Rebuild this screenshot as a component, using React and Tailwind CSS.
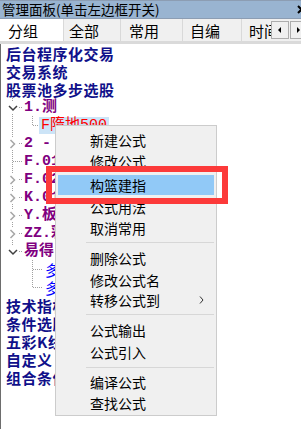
import React from "react";

const cjk = "font-['Noto_Sans_CJK_SC',sans-serif]";
const mono = "font-['Liberation_Mono','Noto_Sans_CJK_SC',monospace]";

const tabs = [
  { label: "分组", w: "w-[63px]", pl: "pl-[8px]", active: true },
  { label: "全部", w: "w-[57px]", pl: "pl-[5px]" },
  { label: "常用", w: "w-[62px]", pl: "pl-[8px]" },
  { label: "自编", w: "w-[59px]", pl: "pl-[7px]" },
  { label: "时间", w: "w-[60px]", pl: "pl-[7px]" },
];

// labels are cut where the context menu covers them
const rows = [
  { type: "root", text: "后台程序化交易" },
  { type: "root", text: "交易系统" },
  { type: "root", text: "股票池多步选股" },
  { type: "l1", g: "open", text: "1.测" },
  { type: "sel", text: "F隋地500" },
  { type: "l1", g: "closed", text: "2 -" },
  { type: "l1", g: "leaf", text: "F.01" },
  { type: "l1", g: "closed", text: "F.02" },
  { type: "l1", g: "closed", text: "K.01" },
  { type: "l1", g: "closed", text: "Y.板" },
  { type: "l1", g: "closed", text: "ZZ.彩" },
  { type: "l1", g: "lastOpen", text: "易得" },
  { type: "l2", g2: "tee", text: "多" },
  { type: "l2", g2: "last", text: "多" },
  { type: "root", text: "技术指标" },
  { type: "root", text: "条件选股" },
  { type: "root", text: "五彩K线" },
  { type: "root", text: "自定义" },
  { type: "root", text: "组合条件" },
];

const menu = [
  { t: "新建公式", h: "h-[22px]" },
  { t: "修改公式", h: "h-[20px]" },
  { t: "构篮建指", h: "h-[20px] mt-[4px]", active: true },
  { t: "公式用法", h: "h-[23px]" },
  { t: "取消常用", h: "h-[20px]" },
  { sep: true, h: "h-[9px]" },
  { t: "删除公式", h: "h-[22px]" },
  { t: "修改公式名", h: "h-[21px]" },
  { t: "转移公式到", h: "h-[20px]", sub: true },
  { sep: true, h: "h-[9px]" },
  { t: "公式输出", h: "h-[22px]" },
  { t: "公式引入", h: "h-[22px]" },
  { sep: true, h: "h-[8px]" },
  { t: "编译公式", h: "h-[22px]" },
  { t: "查找公式", h: "h-[20px]" },
];

const dot = { stroke: "#a0a0a0", strokeDasharray: "1 1", shapeRendering: "crispEdges" };

function Gutter({ kind }) {
  const hasChevron = kind === "open" || kind === "closed" || kind === "lastOpen";
  return (
    <svg width="22" height="18" className="shrink-0">
      {kind !== "blank" && (
        <line x1="11.5" y1="0" x2="11.5" y2={kind === "lastOpen" ? 10 : 18} {...dot} />
      )}
      {kind !== "blank" && kind !== "pass" && <line x1="12" y1="9.5" x2="22" y2="9.5" {...dot} />}
      {hasChevron && <rect x="6" y="3" width="12" height="13" fill="#fff" />}
      {(kind === "open" || kind === "lastOpen") && (
        <polyline points="8,8 12,12 16,8" fill="none" stroke="#404040" strokeWidth="1.5" />
      )}
      {kind === "closed" && (
        <polyline points="9.5,6 13.5,10 9.5,14" fill="none" stroke="#a6a6a6" strokeWidth="1.5" />
      )}
    </svg>
  );
}

function Gutter2({ kind, w }) {
  return (
    <svg width={w} height="18" className="shrink-0">
      <line x1="9.5" y1="0" x2="9.5" y2={kind === "last" ? 10 : 18} {...dot} />
      <line x1="10" y1="9.5" x2={w} y2="9.5" {...dot} />
    </svg>
  );
}

function TreeRow({ row }) {
  if (row.type === "root") {
    return (
      <div className={`h-[18px] flex items-center pl-[5px] whitespace-nowrap ${cjk} text-[15px] leading-none font-bold tracking-[0.5px] text-[#10108a]`}>
        {row.text}
      </div>
    );
  }
  if (row.type === "l1") {
    return (
      <div className="h-[18px] flex items-center whitespace-nowrap">
        <Gutter kind={row.g} />
        <span className={`pl-[1px] ${mono} text-[15px] leading-none font-bold text-[#800080]`}>{row.text}</span>
      </div>
    );
  }
  if (row.type === "sel") {
    return (
      <div className="h-[18px] flex items-center whitespace-nowrap">
        <Gutter kind="pass" />
        <Gutter2 kind="last" w={16} />
        <span className={`h-[17px] flex items-center bg-[#cce4f7] px-[2px] ${mono} text-[15px] leading-none text-[#ff0000]`}>
          {row.text}
        </span>
      </div>
    );
  }
  return (
    <div className="h-[18px] flex items-center whitespace-nowrap">
      <Gutter kind="blank" />
      <Gutter2 kind={row.g2} w={20} />
      <span className={`pl-[2px] ${cjk} text-[15px] leading-none text-[#0000ff]`}>{row.text}</span>
    </div>
  );
}

export default function App() {
  return (
    <div className={`relative w-[301px] h-[429px] overflow-hidden bg-white ${cjk}`}>
      {/* title */}
      <div className="h-[19px] flex items-center justify-between bg-[#99b4d1] border-t border-b border-[#8c9db3] pl-[2px] whitespace-nowrap">
        <span className="text-[13.5px] leading-none text-black">管理面板(单击左边框开关)</span>
        <svg width="9" height="9" className="shrink-0 mr-[-5px]">
          <path d="M1 1 L8 8 M8 1 L1 8" stroke="#000" strokeWidth="2" />
        </svg>
      </div>

      {/* tabs */}
      <div className="relative h-[22px] flex bg-[#f0f0f0] overflow-hidden">
        {tabs.map((t) => (
          <div
            key={t.label}
            className={`${t.w} ${t.pl} shrink-0 flex items-center text-[15px] leading-none text-black ${
              t.active ? "bg-white" : "bg-[#f0f0f0] border-l border-[#d9d9d9]"
            }`}
          >
            {t.label}
          </div>
        ))}
        <div className="absolute left-[271px] top-[2px] flex gap-[1px]">
          <div className="w-[18px] h-[18px] flex items-center justify-center bg-[#f0f0f0] border border-[#adadad]">
            <svg width="4" height="6"><path d="M3 0 L0 3 L3 6 Z" fill="#000" /></svg>
          </div>
          <div className="w-[18px] h-[18px] flex items-center justify-center bg-[#f0f0f0] border border-[#adadad]">
            <svg width="4" height="6"><path d="M0 0 L3 3 L0 6 Z" fill="#000" /></svg>
          </div>
        </div>
      </div>
      <div className="h-[3px] bg-[#dadada]" />

      {/* tree */}
      <div className="h-[385px] flex flex-col border-l border-[#6d6d6d]">
        {rows.map((r, i) => (
          <TreeRow key={i} row={r} />
        ))}
      </div>

      {/* context menu */}
      <div className="absolute left-[55px] top-[125px] w-[162px] flex flex-col pt-[3px] pb-[2px] bg-[#f0f0f0] border border-[#cccccc]">
        {menu.map((m, i) =>
          m.sep ? (
            <div key={i} className={`${m.h} flex items-center ml-[30px] mr-[2px]`}>
              <div className="w-full h-px bg-[#d7d7d7]" />
            </div>
          ) : (
            <div
              key={i}
              className={`${m.h} mx-[2px] flex items-center justify-between pl-[32px] pr-[10px] text-[14px] leading-none text-black ${
                m.active ? "bg-[#91c9f7]" : ""
              }`}
            >
              <span>{m.t}</span>
              {m.sub && (
                <svg width="5" height="8">
                  <path d="M1 0.5 L4 4 L1 7.5" fill="none" stroke="#333" strokeWidth="1" />
                </svg>
              )}
            </div>
          )
        )}
      </div>

      {/* annotation box */}
      <div className="absolute left-[46px] top-[166px] w-[182px] h-[38px] border-[6px] border-[#fc3a3a]" />
    </div>
  );
}
